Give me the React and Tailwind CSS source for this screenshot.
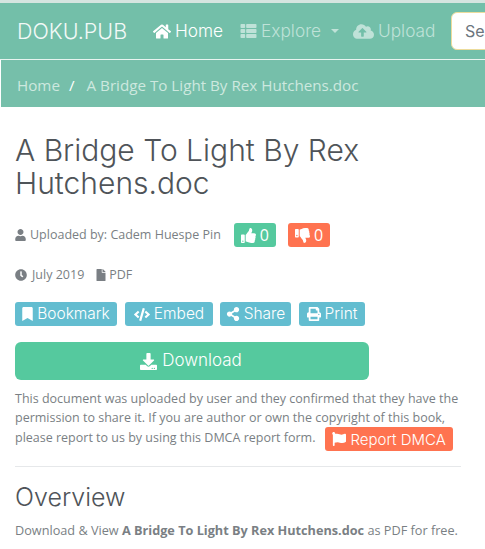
import React from 'react';
import {
  FaHome, FaThList, FaCloudUploadAlt, FaUser, FaThumbsUp, FaThumbsDown, FaClock, FaFile,
  FaBookmark, FaCode, FaShareAlt, FaPrint, FaDownload, FaFlag,
} from 'react-icons/fa';

const heading = "font-['Inter',sans-serif]";

const InfoButton = ({ icon: Icon, label, iconClass, className }) => (
  <span className={`flex items-center gap-1 h-6 rounded-[3px] bg-[#63bdd0] text-white text-[15.5px] ${heading} font-light ${className}`}>
    <Icon className={iconClass} />
    {label}
  </span>
);

export default function App() {
  return (
    <div className="w-[485px] h-[549px] overflow-hidden bg-white font-['Open_Sans',sans-serif] text-[#6c757d]">
      <div className="h-[3px] bg-[#d5e5e0]" />
      <nav className={`flex items-center h-[56px] pl-[17px] bg-[#73bfa9] text-[17.3px] ${heading} font-light whitespace-nowrap`}>
        <span className="shrink-0 text-[#f2f9f7] text-[21.5px] w-[136px]">DOKU.PUB</span>
        <span className="shrink-0 flex items-center gap-1 text-white w-[87px]">
          <FaHome className="w-[18px] h-[17px]" /> Home
        </span>
        <span className="shrink-0 flex items-center gap-1 text-[#bfe2d8] w-[113px]">
          <FaThList className="w-[17px] h-[16px]" /> Explore
          <span className="ml-[6px] border-x-[4px] border-t-[4px] border-x-transparent border-t-[#bfe2d8]" />
        </span>
        <span className="shrink-0 flex items-center gap-1 text-[#bfe2d8] w-[98px]">
          <FaCloudUploadAlt className="w-[21px] h-[17px]" /> Upload
        </span>
        <span className="shrink-0 flex items-center w-[120px] h-[38px] pl-[13px] bg-white rounded-md border border-[#ecdc9c] text-[#6c757d] font-normal text-[16px]">
          Search
        </span>
      </nav>
      <div className="h-px bg-[#e8f4f0]" />
      <div className="flex items-center h-[47px] ml-px pl-[16px] pt-[3px] bg-[#76bfaa] text-[15.2px] text-[#cde8df] whitespace-nowrap">
        Home
        <span className="ml-[9px] mr-[12px] text-white">/</span>
        A Bridge To Light By Rex Hutchens.doc
      </div>

      <main className="px-[15px] pt-[27px]">
        <h1 className={`w-[440px] text-[30px] leading-[33px] font-light text-[#4f5459] ${heading}`}>
          A Bridge To Light By Rex Hutchens.doc
        </h1>

        <div className="flex items-center mt-[23px] h-6 text-[12.5px] text-[#7a7f84]">
          <FaUser className="w-[11px] h-[12px] mr-1" />
          Uploaded by: Cadem Huespe Pin
          <span className="flex items-center gap-1 h-6 ml-[13px] px-[7px] rounded-[3px] bg-[#55c99e] text-white text-[16px]">
            <FaThumbsUp className="w-[15px] h-[15px]" /> 0
          </span>
          <span className="flex items-center gap-1 h-6 ml-3 px-[7px] rounded-[3px] bg-[#ff7350] text-white text-[16px]">
            <FaThumbsDown className="w-[15px] h-[15px]" /> 0
          </span>
        </div>

        <div className="flex items-center mt-[19px] h-[18px] text-[12.5px] text-[#7a7f84]">
          <FaClock className="w-3 h-3 mr-[5px]" />
          July 2019
          <FaFile className="w-[10px] h-3 ml-3 mr-[3px]" />
          PDF
        </div>

        <div className="flex items-center mt-[18px]">
          <InfoButton icon={FaBookmark} iconClass="w-[11px] h-[14px]" label="Bookmark" className="w-[102px] justify-center mr-2" />
          <InfoButton icon={FaCode} iconClass="w-[16px] h-[13px]" label="Embed" className="w-[88px] justify-center mr-[7px]" />
          <InfoButton icon={FaShareAlt} iconClass="w-[14px] h-[14px]" label="Share" className="w-[71px] justify-center mr-2" />
          <InfoButton icon={FaPrint} iconClass="w-[14px] h-[14px]" label="Print" className="w-[66px] justify-center" />
        </div>

        <div className={`flex items-center justify-center gap-[5px] w-[354px] h-[38px] mt-[16px] pr-[2px] rounded-md bg-[#55c99e] text-white text-[17px] font-light ${heading}`}>
          <FaDownload className="w-[17px] h-[17px]" /> Download
        </div>

        <p className="w-[450px] mt-[9px] text-[12.5px] leading-[19px] text-[#7a7f84]">
          This document was uploaded by user and they confirmed that they have the permission to share it. If you are author or own the copyright of this book, please report to us by using this DMCA report form.
          <span className={`inline-flex items-center gap-1 h-6 ml-[10px] px-[7px] align-middle rounded-[3px] bg-[#ff7350] text-white text-[15px] font-light ${heading}`}>
            <FaFlag className="w-[14px] h-[14px]" /> Report DMCA
          </span>
        </p>

        <hr className="w-[446px] mt-[15px] border-t border-[#e6e8ea]" />

        <h2 className={`mt-[16px] text-[25px] leading-[28px] font-light text-[#4f5459] ${heading}`}>Overview</h2>

        <p className="mt-[10px] text-[12.7px] leading-[18px] text-[#7a7f84] whitespace-nowrap">
          Download &amp; View <b className="font-bold">A Bridge To Light By Rex Hutchens.doc</b> as PDF for free.
        </p>
      </main>
    </div>
  );
}
